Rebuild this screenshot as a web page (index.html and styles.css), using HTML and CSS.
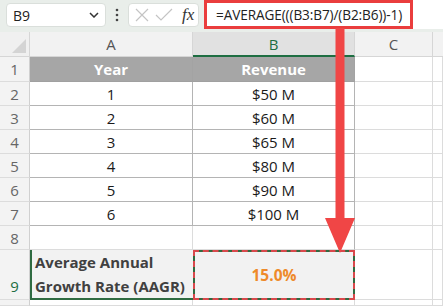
FILE: index.html
```html
<!DOCTYPE html>
<html>
<head>
<meta charset="utf-8">
<link rel="stylesheet" href="styles.css">
</head>
<body>
<div class="app">
  <div class="toolbar">
    <div class="namebox">
      <span class="nb-text">B9</span>
      <svg class="chev" width="10" height="6" viewBox="0 0 10 6"><path d="M1 1 L5 5 L9 1" fill="none" stroke="#333" stroke-width="1.5"/></svg>
    </div>
    <div class="dots">
      <svg width="4" height="14" viewBox="0 0 4 14"><circle cx="2" cy="2" r="1.3" fill="#444"/><circle cx="2" cy="7" r="1.3" fill="#444"/><circle cx="2" cy="12" r="1.3" fill="#444"/></svg>
    </div>
    <div class="fxbox">
      <svg width="16" height="16" viewBox="0 0 16 16"><path d="M2 2 L14 14 M14 2 L2 14" stroke="#c4c4c4" stroke-width="1.2" fill="none"/></svg>
      <svg width="18" height="16" viewBox="0 0 18 16"><path d="M1 8 L6 13 L17 2" stroke="#c4c4c4" stroke-width="1.2" fill="none"/></svg>
      <span class="fx">fx</span>
    </div>
    <div class="formula">
      <div class="formula-hl">=AVERAGE(((B3:B7)/(B2:B6))-1)</div>
    </div>
  </div>
  <div class="sheet">
    <div class="corner"><div class="tri"></div></div>
    <div class="colh">A</div>
    <div class="colh sel">B</div>
    <div class="colh">C</div>
    <div class="colh last"></div>

    <div class="rowh">1</div>
    <div class="cell head">Year</div>
    <div class="cell head">Revenue</div>
    <div class="cell grid"></div>
    <div class="cell grid last"></div>

    <div class="rowh">2</div>
    <div class="cell data">1</div>
    <div class="cell data">$50 M</div>
    <div class="cell grid"></div>
    <div class="cell grid last"></div>

    <div class="rowh">3</div>
    <div class="cell data">2</div>
    <div class="cell data">$60 M</div>
    <div class="cell grid"></div>
    <div class="cell grid last"></div>

    <div class="rowh">4</div>
    <div class="cell data">3</div>
    <div class="cell data">$65 M</div>
    <div class="cell grid"></div>
    <div class="cell grid last"></div>

    <div class="rowh">5</div>
    <div class="cell data">4</div>
    <div class="cell data">$80 M</div>
    <div class="cell grid"></div>
    <div class="cell grid last"></div>

    <div class="rowh">6</div>
    <div class="cell data">5</div>
    <div class="cell data">$90 M</div>
    <div class="cell grid"></div>
    <div class="cell grid last"></div>

    <div class="rowh">7</div>
    <div class="cell data">6</div>
    <div class="cell data">$100 M</div>
    <div class="cell grid"></div>
    <div class="cell grid last"></div>

    <div class="rowh">8</div>
    <div class="cell grid a8"></div>
    <div class="cell grid b8"></div>
    <div class="cell grid"></div>
    <div class="cell grid last"></div>

    <div class="rowh sel9">9</div>
    <div class="cell label">Average Annual<br>Growth Rate (AAGR)</div>
    <div class="cell result">15.0%</div>
    <div class="cell grid"></div>
    <div class="cell grid last"></div>

    <div class="rowh tail"></div>
    <div class="cell grid tail"></div>
    <div class="cell grid tail"></div>
    <div class="cell grid tail"></div>
    <div class="cell grid tail last"></div>
  </div>
  <svg class="arrow" width="40" height="230" viewBox="0 0 40 230">
    <path d="M15.5 0 H24.5 V190 H35 L20 225 L5 190 H15.5 Z" fill="#f04646"/>
  </svg>
</div>
</body>
</html>
```
FILE: styles.css
```css
* { box-sizing: border-box; }
html, body { margin: 0; padding: 0; }
body {
  width: 443px;
  height: 306px;
  overflow: hidden;
  background: #fff;
  font-family: "Open Sans", "Noto Sans", sans-serif;
}
.app {
  position: relative;
  width: 443px;
  height: 306px;
}
.toolbar {
  height: 32px;
  background: #e9eeea;
  display: flex;
  align-items: flex-start;
}
.namebox {
  margin: 3px 0 0 6px;
  width: 100px;
  height: 24px;
  background: #fff;
  border: 1px solid #dadfdb;
  border-radius: 4px;
  display: flex;
  align-items: center;
  justify-content: space-between;
  padding: 0 6px 0 6px;
}
.nb-text {
  font-size: 14px;
  color: #222;
}
.dots {
  width: 22px;
  height: 30px;
  display: flex;
  align-items: center;
  justify-content: center;
}
.fxbox {
  margin-top: 3px;
  width: 71px;
  height: 24px;
  background: #fff;
  border: 1px solid #dadfdb;
  border-radius: 4px;
  display: flex;
  align-items: center;
  gap: 5px;
  padding-left: 5px;
}
.fx {
  font-family: "Liberation Serif", serif;
  font-style: italic;
  font-size: 17px;
  color: #333;
  margin-left: 4px;
}
.formula {
  margin-left: 5px;
  flex: 1;
  height: 29px;
  background: #fff;
}
.formula-hl {
  width: 209px;
  height: 29px;
  border: 3px solid #ea3d3d;
  font-size: 13.6px;
  color: #222;
  display: flex;
  align-items: center;
  padding-left: 9px;
  white-space: nowrap;
  letter-spacing: -0.1px;
}
.sheet {
  display: grid;
  grid-template-columns: 30px 163px 162px 78px 10px;
  grid-template-rows: 25px 25px 24px 24px 24px 24px 24px 24px 24px 50px 6px;
}
.corner {
  background: #f0f0f0;
  border-right: 1px solid #d6d6d6;
  border-bottom: 1px solid #d6d6d6;
  position: relative;
}
.tri {
  position: absolute;
  right: 3px;
  bottom: 3px;
  width: 0;
  height: 0;
  border-left: 14px solid transparent;
  border-bottom: 14px solid #d4d4d4;
}
.colh {
  background: #f2f2f2;
  border-right: 1px solid #d6d6d6;
  border-bottom: 1px solid #d6d6d6;
  display: flex;
  align-items: center;
  justify-content: center;
  font-size: 15px;
  color: #555;
}
.colh.sel {
  background: #e1e1e1;
  color: #1e6e42;
  border-bottom: 2px solid #1e6e42;
}
.colh.last, .cell.last { border-right: none; }
.rowh {
  background: #f3f3f3;
  border-right: 1px solid #d0d0d0;
  border-bottom: 1px solid #dcdcdc;
  display: flex;
  align-items: center;
  justify-content: center;
  font-size: 15px;
  color: #666;
}
.rowh.sel9 {
  color: #1e6e42;
  align-items: flex-end;
  padding-bottom: 3px;
}
.cell {
  display: flex;
  align-items: center;
  justify-content: center;
  font-size: 15px;
  color: #1a1a1a;
}
.cell.grid {
  border-right: 1px solid #dcdcdc;
  border-bottom: 1px solid #dcdcdc;
}
.cell.head {
  background: #a6a6a6;
  color: #fff;
  font-weight: 700;
  border-bottom: 1px solid #a0a0a0;
  border-right: 1px solid #a3a3a3;
}
.cell.data {
  background: #fff;
  border-right: 1px solid #b4b4b4;
  border-bottom: 1px solid #b4b4b4;
}
.cell.b8 { border-right-color: #b4b4b4; }
.cell.label {
  background: #f2f2f2;
  border-left: 2px solid #2f6b41;
  border-bottom: 2px solid #2f6b41;
  justify-content: flex-start;
  text-align: left;
  padding-left: 3px;
  font-weight: 700;
  font-size: 15px;
  color: #404040;
  line-height: 24px;
  white-space: nowrap;
}
.cell.result {
  border: 2px dashed #d9484c;
  background: linear-gradient(#f2f2f2, #f2f2f2) padding-box, #2f6b41 border-box;
  color: #ee8a2a;
  font-weight: 700;
  font-size: 15.5px;
}
.arrow {
  position: absolute;
  left: 320px;
  top: 28px;
}
```
